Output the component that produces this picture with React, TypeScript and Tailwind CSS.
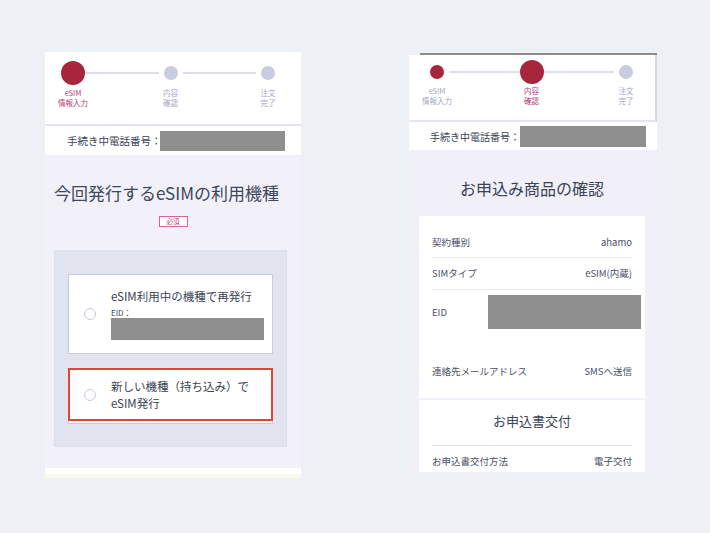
import React from "react";

type StepState = "current" | "done" | "todo";

const steps = [
  { l1: "eSIM", l2: "情報入力" },
  { l1: "内容", l2: "確認" },
  { l1: "注文", l2: "完了" },
];

function Dot({ state }: { state: StepState }) {
  return (
    <div className="w-[24px] h-[24px] flex items-center justify-center shrink-0">
      {state === "current" && <div className="w-[24px] h-[24px] rounded-full bg-[#a8263c]" />}
      {state === "done" && <div className="w-[14px] h-[14px] rounded-full bg-[#a8263c]" />}
      {state === "todo" && <div className="w-[14px] h-[14px] rounded-full bg-[#c9cbe0]" />}
    </div>
  );
}

function Stepper({ states, pad, labelGap }: { states: StepState[]; pad: string; labelGap: string }) {
  return (
    <div className={pad}>
      <div className="flex items-center">
        <Dot state={states[0]} />
        <div className="flex-1 h-[2px] bg-[#dddeea]" />
        <Dot state={states[1]} />
        <div className="flex-1 h-[2px] bg-[#dddeea]" />
        <Dot state={states[2]} />
      </div>
      <div className={`flex justify-between ${labelGap}`}>
        {steps.map((s, i) => (
          <div key={i} className="w-[24px] flex justify-center">
            <div
              className={`whitespace-nowrap text-center text-[7.5px] leading-[10px] ${
                states[i] === "current" ? "text-[#b53a78]" : "text-[#a3a7bd]"
              }`}
            >
              <div>{s.l1}</div>
              <div>{s.l2}</div>
            </div>
          </div>
        ))}
      </div>
    </div>
  );
}

function Row({ label, value, h }: { label: string; value: string; h: string }) {
  return (
    <div className={`flex items-center justify-between border-b border-[#e6e7f0] ${h}`}>
      <span>{label}</span>
      <span>{value}</span>
    </div>
  );
}

export default function App() {
  return (
    <div
      className="w-[710px] h-[533px] bg-[#edf0f5] flex items-start text-[#3c4357] overflow-hidden"
      style={{ fontFamily: '"Noto Sans CJK JP", "Noto Sans", sans-serif' }}
    >
      {/* Left screen */}
      <div className="ml-[45px] mt-[52px] w-[256px] flex flex-col">
        <div className="bg-white h-[74px] pt-[9px] border-b-2 border-[#e4e4ef]">
          <Stepper states={["current", "todo", "todo"]} pad="pl-[16px] pr-[21px]" labelGap="mt-[3px]" />
        </div>
        <div className="bg-white h-[29px] flex items-center pl-[22px]">
          <span className="w-[93px] text-[10.5px] whitespace-nowrap">手続き中電話番号：</span>
          <div className="w-[125px] h-[20px] bg-[#8f8f8f]" />
        </div>
        <div className="bg-[#f2f1fa] h-[313px] flex flex-col items-center">
          <h1 className="mt-[26px] self-start ml-[9px] text-[17px] leading-[24px] whitespace-nowrap text-[#404659]">
            今回発行するeSIMの利用機種
          </h1>
          <div className="mt-[11px] w-[29px] h-[11px] border border-[#d4669c] bg-white flex items-center justify-center text-[6.5px] leading-none text-[#c2407a]">
            必須
          </div>
          <div className="mt-[23px] self-start ml-[9px] w-[233px] h-[197px] bg-[#e1e3ef] border border-[#dcdeeb] pt-[23px] px-[13px]">
            <div className="w-[205px] h-[80px] bg-white border border-[#c8cbe0] flex items-center">
              <div className="ml-[15px] w-[12px] h-[12px] rounded-full border border-[#c8cbe0] shrink-0" />
              <div className="ml-[15px] flex flex-col">
                <span className="text-[11.5px] leading-[16px] whitespace-nowrap">eSIM利用中の機種で再発行</span>
                <span className="mt-[4px] text-[8px] leading-[10px]">EID：</span>
                <div className="w-[153px] h-[22px] bg-[#8f8f8f]" />
              </div>
            </div>
            <div className="relative mt-[14px] w-[205px] h-[56px] bg-white border border-[#c8cbe0]">
              <div className="h-[51px] flex items-center">
                <div className="ml-[15px] w-[12px] h-[12px] rounded-full border border-[#c8cbe0] shrink-0" />
                <div className="ml-[15px] text-[11.5px] leading-[17px]">
                  <div className="whitespace-nowrap">新しい機種（持ち込み）で</div>
                  <div>eSIM発行</div>
                </div>
              </div>
              <div className="absolute -left-px -right-px -top-px h-[53px] border-2 border-[#e8413c]" />
            </div>
          </div>
        </div>
        <div className="bg-white h-[6px]" />
        <div className="bg-[#fafaec] h-[4px]" />
      </div>

      {/* Right screen */}
      <div className="ml-[108px] mt-[53px] w-[248px] flex flex-col">
        <div className="ml-[11px] h-[2px] bg-[#8c8c8c]" />
        <div className="bg-white h-[67px] pt-[5px] border-b-2 border-[#e4e4ef] border-r-2 border-r-[#d6d6dc]">
          <Stepper states={["done", "current", "todo"]} pad="pl-[16px] pr-[17px]" labelGap="mt-[2px]" />
        </div>
        <div className="bg-white h-[28px] flex items-center pl-[21px]">
          <span className="w-[90px] text-[10px] whitespace-nowrap">手続き中電話番号：</span>
          <div className="w-[126px] h-[21px] bg-[#8f8f8f]" />
        </div>
        <div className="bg-[#f1f0f9] h-[322px] flex flex-col overflow-hidden">
          <h2 className="mt-[27px] text-center text-[16px] leading-[22px] pr-[2px]">お申込み商品の確認</h2>
          <div className="mt-[17px] ml-[10px] w-[226px] h-[182px] bg-white px-[13px] pt-[12px] text-[9.5px] text-[#4a5063]">
            <Row label="契約種別" value="ahamo" h="h-[30px]" />
            <Row label="SIMタイプ" value="eSIM(内蔵)" h="h-[32px]" />
            <div className="h-[55px] pt-[5px]">
              <div className="flex items-center">
                <span className="w-[56px] shrink-0">EID</span>
                <div className="w-[153px] h-[34px] bg-[#8f8f8f] shrink-0" />
              </div>
            </div>
            <div className="h-[53px] flex items-center justify-between">
              <span>連絡先メールアドレス</span>
              <span>SMSへ送信</span>
            </div>
          </div>
          <div className="mt-[2px] ml-[10px] w-[226px] flex-1 bg-white px-[13px] pt-[12px]">
            <div className="h-[34px] border-b border-[#e3e4ee] text-center text-[13px] leading-[18px]">お申込書交付</div>
            <div className="mt-[8px] flex justify-between text-[9.5px] leading-[14px] text-[#4a5063]">
              <span>お申込書交付方法</span>
              <span>電子交付</span>
            </div>
          </div>
        </div>
      </div>
    </div>
  );
}
